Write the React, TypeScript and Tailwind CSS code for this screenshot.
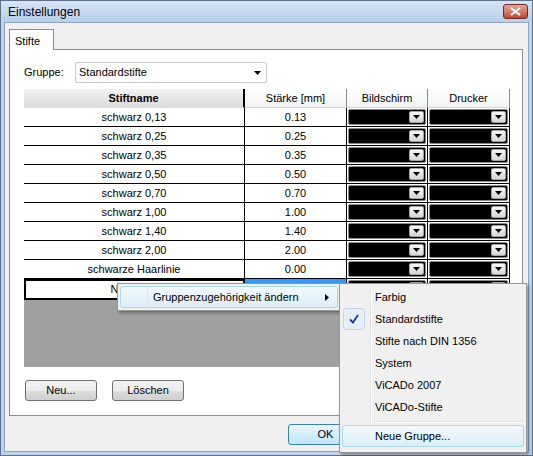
import React from 'react'

const rows = [
  ['schwarz 0,13', '0.13'],
  ['schwarz 0,25', '0.25'],
  ['schwarz 0,35', '0.35'],
  ['schwarz 0,50', '0.50'],
  ['schwarz 0,70', '0.70'],
  ['schwarz 1,00', '1.00'],
  ['schwarz 1,40', '1.40'],
  ['schwarz 2,00', '2.00'],
  ['schwarze Haarlinie', '0.00'],
]

const groups = ['Farbig', 'Standardstifte', 'Stifte nach DIN 1356', 'System', 'ViCADo 2007', 'ViCADo-Stifte']

function DownArrow({ className = '' }: { className?: string }) {
  return (
    <svg width="7" height="4" viewBox="0 0 7 4" className={className}>
      <path d="M0 0h7L3.5 4z" fill="#000" />
    </svg>
  )
}

function ColorCombo() {
  return (
    <div className="h-full border-r border-black py-[1px] pl-[1px] pr-[1px]">
      <div className="flex h-full rounded-[2px] border border-[#8a8a8a] bg-black p-[1px]">
        <div className="flex-1 bg-black" />
        <div className="flex w-[15px] items-center justify-center rounded-[2px] border border-[#a4a4a4] bg-gradient-to-b from-[#f7f7f7] to-[#d6d6d6]">
          <DownArrow />
        </div>
      </div>
    </div>
  )
}

function VistaButton({ label, width, isDefault }: { label: string; width: string; isDefault?: boolean }) {
  return (
    <div
      className={`${width} flex h-[21px] items-center justify-center rounded-[3px] border ${
        isDefault
          ? 'border-[#3c7fb1] bg-gradient-to-b from-[#eaf6fd] to-[#bee6fd]'
          : 'border-[#707070] bg-[linear-gradient(#f2f2f2_0%,#ebebeb_50%,#dddddd_51%,#cfcfcf_100%)]'
      }`}
    >
      <span className="text-[11px] text-black">{label}</span>
    </div>
  )
}

export default function App() {
  return (
    <div className="relative flex h-[456px] w-[533px] flex-col border border-[#5d7189] bg-[#bfd3ea] font-['Liberation_Sans',Arial,sans-serif] text-[11px] text-black">
      {/* Title bar */}
      <div className="flex h-[21px] items-center justify-between bg-gradient-to-b from-[#d6e5f5] to-[#b8cfe9] pl-[7px] pr-[4px]">
        <span className="text-[12px]">Einstellungen</span>
        <div className="flex h-[15px] w-[25px] items-center justify-center rounded-[3px] border border-[#6d2a22] bg-gradient-to-b from-[#e7a595] to-[#c2462d]">
          <svg width="11" height="9" viewBox="0 0 11 9">
            <path d="M1 1l9 7M10 1l-9 7" stroke="#fff" strokeWidth="2.2" />
          </svg>
        </div>
      </div>

      {/* Body */}
      <div className="mx-[3px] mb-[3px] flex flex-1 flex-col border border-[#8fa4bf] bg-[#f0f0f0] pl-[4px] pr-[5px] pt-[6px]">
        {/* Tab */}
        <div className="flex">
          <div className="relative z-10 -mb-[1px] flex h-[21px] w-[45px] items-start border border-b-0 border-[#898c95] bg-white pl-[5px] pt-[3px]">
            Stifte
          </div>
        </div>

        {/* Tab panel */}
        <div className="flex h-[367px] flex-col border border-[#898c95] bg-white pl-[14px] pt-[12px]">
          <div className="flex h-[21px] items-center">
            <span className="w-[51px]">Gruppe:</span>
            <div className="flex h-[21px] w-[192px] items-center justify-between rounded-[2px] border border-[#c5c8cf] bg-white pl-[3px] pr-[5px]">
              <span>Standardstifte</span>
              <DownArrow />
            </div>
          </div>

          {/* Grid */}
          <div className="mt-[6px] flex h-[278px] w-[486px] flex-col bg-[#a0a0a0]">
            <div className="grid h-[19px] grid-cols-[221px_102px_81px_82px] bg-white">
              <div className="flex items-center justify-center border-b border-r-2 border-[#dadada] border-r-black bg-gradient-to-b from-[#f2f2f2] to-[#dcdcdc] font-bold">
                Stiftname
              </div>
              <div className="flex items-center justify-center border-b border-r border-[#d5d5d5] border-r-[#8a8a8a] bg-gradient-to-b from-white to-[#f1f2f3]">
                Stärke [mm]
              </div>
              <div className="flex items-center justify-center border-b border-r border-[#d5d5d5] border-r-[#8a8a8a] bg-gradient-to-b from-white to-[#f1f2f3]">
                Bildschirm
              </div>
              <div className="flex items-center justify-center border-b border-r border-[#d5d5d5] border-r-[#8a8a8a] bg-gradient-to-b from-white to-[#f1f2f3]">
                Drucker
              </div>
            </div>

            {rows.map(([name, size]) => (
              <div key={name} className="grid h-[19px] grid-cols-[221px_102px_81px_82px] border-b border-black bg-white">
                <div className="flex items-center justify-center border-r border-black">{name}</div>
                <div className="flex items-center justify-center border-r border-black">{size}</div>
                <ColorCombo />
                <ColorCombo />
              </div>
            ))}

            {/* new row */}
            <div className="grid h-[19px] grid-cols-[221px_102px_81px_82px] bg-white">
              <div className="flex items-center justify-center border-2 border-black pl-[4px]">Neuer Stift</div>
              <div className="border-r border-black bg-[#3399ff]" />
              <ColorCombo />
              <ColorCombo />
            </div>
          </div>

          <div className="mt-[13px] flex gap-[15px] pl-[1px]">
            <VistaButton label="Neu..." width="w-[72px]" />
            <VistaButton label="Löschen" width="w-[72px]" />
          </div>
        </div>

        {/* Dialog buttons (second one lies under the submenu) */}
        <div className="mt-[8px] flex gap-[6px] pl-[279px]">
          <VistaButton label="OK" width="w-[75px]" isDefault />
          <VistaButton label="" width="w-[75px]" />
        </div>
      </div>

      {/* Context menu */}
      <div className="absolute left-[116px] top-[282px] flex h-[28px] w-[224px] border border-[#979797] bg-[#f0f0f0] p-[2px] shadow-[2px_2px_3px_rgba(0,0,0,0.35)]">
        <div className="relative flex h-[22px] w-full items-center rounded-[3px] border border-[#a8d8eb] bg-gradient-to-b from-[#f2f9fd] to-[#dcedf9]">
          <div className="absolute left-[26px] top-[-3px] h-[26px] w-[1px] bg-[#dfe4ea]" />
          <span className="ml-[32px] flex-1 text-[11px]">Gruppenzugehörigkeit ändern</span>
          <svg width="4" height="7" viewBox="0 0 4 7" className="mr-[8px]">
            <path d="M0 0v7l4-3.5z" fill="#000" />
          </svg>
        </div>
      </div>

      {/* Submenu */}
      <div className="absolute left-[338px] top-[282px] flex h-[170px] w-[188px] flex-col border border-[#979797] bg-[#f0f0f0] p-[2px] shadow-[2px_2px_3px_rgba(0,0,0,0.35)]">
        <div className="absolute bottom-[2px] left-[30px] top-[2px] w-[1px] bg-[#e2e3e3]" />
        <div className="absolute bottom-[2px] left-[31px] top-[2px] w-[1px] bg-white" />
        {groups.map((g) => (
          <div key={g} className="relative flex h-[22px] items-center">
            {g === 'Standardstifte' && (
              <div className="absolute left-[1px] top-0 flex h-[22px] w-[22px] items-center justify-center rounded-[3px] border border-[#c3d2e6] bg-[#e6eef8]">
                <svg width="10" height="10" viewBox="0 0 10 10">
                  <path d="M1 5.5l3 3L9 1" stroke="#1b3a9c" strokeWidth="1.8" fill="none" />
                </svg>
              </div>
            )}
            <span className="ml-[33px] text-[11px]">{g}</span>
          </div>
        ))}
        <div className="ml-[31px] mt-[3px] h-[1px] bg-[#e0e0e0]" />
        <div className="ml-[31px] mb-[2px] h-[1px] bg-white" />
        <div className="relative flex h-[22px] items-center rounded-[3px] border border-[#a8d8eb] bg-gradient-to-b from-[#f2f9fd] to-[#dcedf9]">
          <span className="ml-[32px] text-[11px]">Neue Gruppe...</span>
        </div>
      </div>
    </div>
  )
}
